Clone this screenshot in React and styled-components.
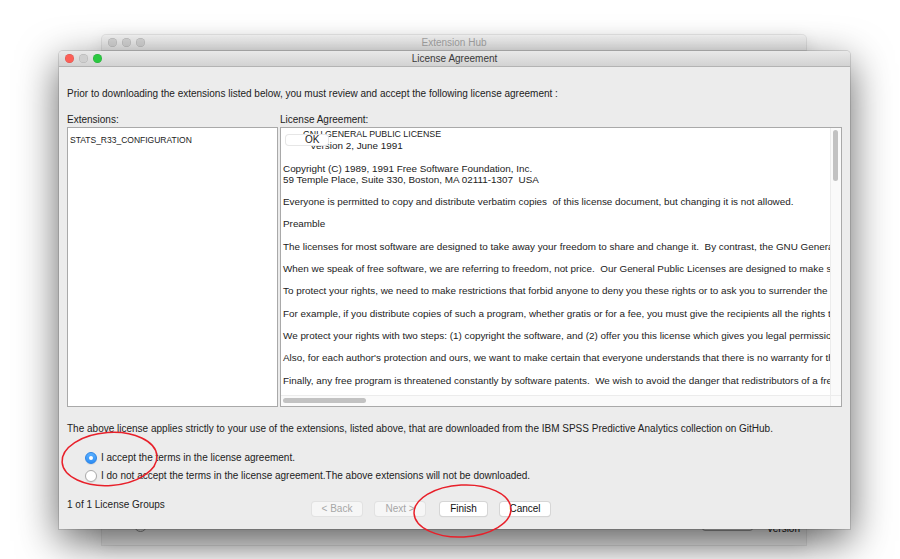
import React from 'react'
import styled, { createGlobalStyle } from 'styled-components'

const GlobalStyle = createGlobalStyle`
  html, body {
    margin: 0;
    padding: 0;
    background: #ffffff;
  }
  body {
    font-family: 'Liberation Sans', Arial, sans-serif;
    color: #222;
  }
`;

const Stage = styled.div`
  position: relative;
  width: 900px;
  height: 559px;
  overflow: hidden;
  background: #fff;
`;

/* ---------- windows ---------- */

const Window = styled.div`
  position: absolute;
  left: ${p => p.$x}px;
  top: ${p => p.$y}px;
  width: ${p => p.$w}px;
  height: ${p => p.$h}px;
  display: flex;
  flex-direction: column;
  background: #ececec;
  border-radius: 4px 4px 0 0;
  box-shadow: ${p => p.$front
    ? '0 12px 40px rgba(0,0,0,0.62), 0 0 0 1px rgba(0,0,0,0.12)'
    : '0 4px 18px rgba(0,0,0,0.12), 0 0 0 1px rgba(0,0,0,0.08)'};
`;

const TitleBar = styled.div`
  position: relative;
  height: 15px;
  flex: none;
  display: flex;
  align-items: center;
  padding-left: 6px;
  gap: 5px;
  border-radius: 4px 4px 0 0;
  background: ${p => p.$inactive
    ? 'linear-gradient(#f6f6f6, #ececec)'
    : 'linear-gradient(#e9e9e9, #d2d2d2)'};
  border-bottom: 1px solid ${p => p.$inactive ? '#dcdcdc' : '#b3b3b3'};
`;

const Light = styled.span`
  width: 9px;
  height: 9px;
  border-radius: 50%;
  background: ${p => p.$c};
  box-shadow: inset 0 0 0 0.5px rgba(0,0,0,0.15);
`;

const Title = styled.div`
  position: absolute;
  left: 0;
  right: 0;
  text-align: center;
  font-size: 10px;
  line-height: 15px;
  color: ${p => p.$inactive ? '#a9a9a9' : '#3a3a3a'};
`;

const BackBody = styled.div`
  flex: 1;
  display: flex;
  align-items: flex-end;
  justify-content: space-between;
  padding: 0 6px 11px 32px;
`;

const BackRadio = styled.span`
  width: 11px;
  height: 11px;
  border-radius: 50%;
  border: 1px solid #8a8a8a;
  margin-bottom: 2px;
`;

const BackRight = styled.div`
  display: flex;
  align-items: flex-end;
  gap: 14px;
  font-size: 10px;
  color: #111;
`;

const BackButton = styled.span`
  width: 49px;
  height: 12px;
  border: 1px solid #9a9a9a;
  border-radius: 3px;
  margin-bottom: 3px;
`;

/* ---------- dialog content ---------- */

const Body = styled.div`
  flex: 1;
  display: flex;
  flex-direction: column;
  padding: 21px 8px 0 8px;
  font-size: 10px;
  line-height: 12px;
`;

const Text = styled.div`
  margin-top: ${p => p.$mt || 0}px;
  white-space: nowrap;
`;

const Panels = styled.div`
  display: grid;
  grid-template-columns: 211px 562px;
  column-gap: 2px;
  margin-top: 14px;
`;

const PanelLabel = styled.div`
  height: 12px;
  margin-bottom: 1px;
`;

const Box = styled.div`
  position: relative;
  height: 280px;
  box-sizing: border-box;
  border: 1px solid #a9a9a9;
  background: #fff;
  overflow: hidden;
`;

const ListItem = styled.div`
  padding: 6px 0 0 2px;
  font-size: 8.5px;
`;

const Scroller = styled.div`
  display: grid;
  grid-template-columns: 1fr 11px;
  grid-template-rows: 1fr 11px;
  height: 100%;
`;

const Doc = styled.div`
  padding: 1px 0 0 2px;
  overflow: hidden;
  font-size: 9.9px;
  line-height: 11.3px;
`;

const Line = styled.div`
  white-space: pre;
  padding-left: ${p => p.$indent || 0}px;
  margin-bottom: ${p => p.$gap ? 11 : 0}px;
  font-size: ${p => p.$caps ? '8.8px' : 'inherit'};
`;

const VTrack = styled.div`
  border-left: 1px solid #ececec;
  background: #fafafa;
  padding: 2px 2px 0 2px;
`;

const HTrack = styled.div`
  border-top: 1px solid #ececec;
  background: #fafafa;
  padding: 2px 0 0 2px;
`;

const Corner = styled.div`
  background: #fafafa;
  border-top: 1px solid #ececec;
  border-left: 1px solid #ececec;
`;

const Thumb = styled.div`
  background: #c2c2c2;
  border-radius: 3px;
  width: ${p => p.$w}px;
  height: ${p => p.$h}px;
`;

const OkButton = styled.div`
  position: absolute;
  left: 5px;
  top: 7px;
  width: 42px;
  height: 10px;
  background: #fff;
  border-radius: 3px;
  box-shadow: 0 0 0 1px #e6e6e6;
  font-size: 10px;
  line-height: 10px;
  padding-left: 19px;
  box-sizing: border-box;
`;

const Radios = styled.div`
  display: flex;
  flex-direction: column;
  margin-top: 14px;
  padding-left: 18px;
`;

const RadioRow = styled.label`
  display: flex;
  align-items: center;
  height: 18px;
  gap: 4px;
`;

const RadioDot = styled.span`
  width: 12px;
  height: 12px;
  border-radius: 50%;
  box-sizing: border-box;
  display: flex;
  align-items: center;
  justify-content: center;
  background: ${p => p.$on ? 'linear-gradient(#5ab0ff, #2d8ef5)' : '#fff'};
  border: 1px solid ${p => p.$on ? '#2b83e6' : '#aaa'};
  box-shadow: 0 1px 1px rgba(0,0,0,0.08);

  &::after {
    content: '';
    display: ${p => p.$on ? 'block' : 'none'};
    width: 4px;
    height: 4px;
    border-radius: 50%;
    background: #fff;
  }
`;

const Footer = styled.div`
  display: flex;
  align-items: flex-start;
  margin-top: 14px;
`;

const Status = styled.div`
  width: 245px;
`;

const Buttons = styled.div`
  display: flex;
  margin-top: 3px;
`;

const Btn = styled.div`
  width: ${p => p.$w}px;
  height: 14px;
  margin-left: ${p => p.$ml || 0}px;
  box-sizing: border-box;
  border-radius: 3px;
  text-align: center;
  font-size: 10px;
  line-height: 14px;
  background: ${p => p.$disabled ? '#f6f6f6' : '#fff'};
  color: ${p => p.$disabled ? '#a6a6a6' : '#111'};
  box-shadow: ${p => p.$disabled
    ? '0 0 0 1px #e2e2e2'
    : '0 0 0 1px #d6d6d6, 0 1px 1px rgba(0,0,0,0.18)'};
`;

const Marks = styled.svg`
  position: absolute;
  left: 0;
  top: 0;
  pointer-events: none;
`;

const licenseLines = [
  { t: 'GNU GENERAL PUBLIC LICENSE', indent: 20, caps: true },
  { t: 'Version 2, June 1991', indent: 27, gap: true },
  { t: 'Copyright (C) 1989, 1991 Free Software Foundation, Inc.' },
  { t: '59 Temple Place, Suite 330, Boston, MA 02111-1307  USA', gap: true },
  { t: 'Everyone is permitted to copy and distribute verbatim copies  of this license document, but changing it is not allowed.', gap: true },
  { t: 'Preamble', gap: true },
  { t: 'The licenses for most software are designed to take away your freedom to share and change it.  By contrast, the GNU General Public License is intended to guarantee your freedom.', gap: true },
  { t: 'When we speak of free software, we are referring to freedom, not price.  Our General Public Licenses are designed to make sure that you have the freedom.', gap: true },
  { t: 'To protect your rights, we need to make restrictions that forbid anyone to deny you these rights or to ask you to surrender the rights.', gap: true },
  { t: 'For example, if you distribute copies of such a program, whether gratis or for a fee, you must give the recipients all the rights that you have.', gap: true },
  { t: 'We protect your rights with two steps: (1) copyright the software, and (2) offer you this license which gives you legal permission to copy.', gap: true },
  { t: 'Also, for each author\'s protection and ours, we want to make certain that everyone understands that there is no warranty for this free software.', gap: true },
  { t: 'Finally, any free program is threatened constantly by software patents.  We wish to avoid the danger that redistributors of a free program will individually obtain patent licenses.' },
];

export default function App() {
  return (
    <>
      <GlobalStyle />
      <Stage>
        <Window $x={102} $y={35} $w={704} $h={510}>
          <TitleBar $inactive>
            <Light $c="#d8d8d8" />
            <Light $c="#d8d8d8" />
            <Light $c="#d8d8d8" />
            <Title $inactive>Extension Hub</Title>
          </TitleBar>
          <BackBody>
            <BackRadio />
            <BackRight>
              <BackButton />
              <span>Version</span>
            </BackRight>
          </BackBody>
        </Window>

        <Window $front $x={59} $y={51} $w={791} $h={478}>
          <TitleBar>
            <Light $c="#fc5f57" />
            <Light $c="#cfcfcf" />
            <Light $c="#2ac840" />
            <Title>License Agreement</Title>
          </TitleBar>
          <Body>
            <Text>Prior to downloading the extensions listed below, you must review and accept the following license agreement :</Text>
            <Panels>
              <PanelLabel>Extensions:</PanelLabel>
              <PanelLabel>License Agreement:</PanelLabel>
              <Box>
                <ListItem>STATS_R33_CONFIGURATION</ListItem>
              </Box>
              <Box>
                <Scroller>
                  <Doc>
                    {licenseLines.map((l, i) => (
                      <Line key={i} $indent={l.indent} $gap={l.gap} $caps={l.caps}>{l.t}</Line>
                    ))}
                  </Doc>
                  <VTrack><Thumb $w={5} $h={51} /></VTrack>
                  <HTrack><Thumb $w={83} $h={5} /></HTrack>
                  <Corner />
                </Scroller>
                <OkButton>OK</OkButton>
              </Box>
            </Panels>
            <Text $mt={16}>The above license applies strictly to your use of the extensions, listed above, that are downloaded from the IBM SPSS Predictive Analytics collection on GitHub.</Text>
            <Radios>
              <RadioRow><RadioDot $on />I accept the terms in the license agreement.</RadioRow>
              <RadioRow><RadioDot />I do not accept the terms in the license agreement.The above extensions will not be downloaded.</RadioRow>
            </Radios>
            <Footer>
              <Status>1 of 1 License Groups</Status>
              <Buttons>
                <Btn $w={50} $disabled>&lt; Back</Btn>
                <Btn $w={50} $ml={13} $disabled>Next &gt;</Btn>
                <Btn $w={47} $ml={15}>Finish</Btn>
                <Btn $w={50} $ml={13}>Cancel</Btn>
              </Buttons>
            </Footer>
          </Body>
        </Window>

        <Marks width="900" height="559" viewBox="0 0 900 559">
          <ellipse cx="109.5" cy="459" rx="47.5" ry="26.5" transform="rotate(-4 109.5 459)" fill="none" stroke="#e8202a" strokeWidth="1.5" />
          <ellipse cx="462.5" cy="511" rx="48.5" ry="26" transform="rotate(-3 462.5 511)" fill="none" stroke="#e8202a" strokeWidth="1.5" />
        </Marks>
      </Stage>
    </>
  )
}
